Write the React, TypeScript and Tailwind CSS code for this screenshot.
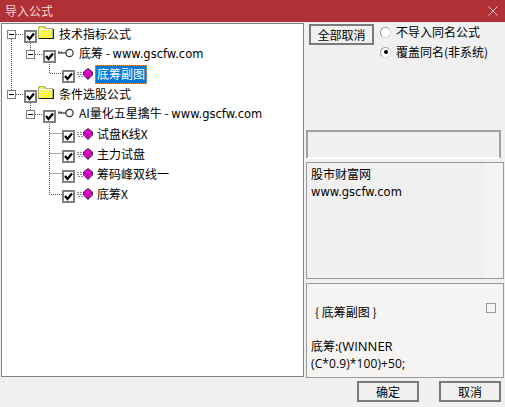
const cjk = { fontFamily: '"Noto Sans CJK SC", sans-serif' };

function Expander() {
  return (
    <span className="flex h-[9px] w-[9px] shrink-0 items-center justify-center border border-[#808080] bg-white">
      <span className="h-px w-[5px] bg-black" />
    </span>
  );
}

function Check() {
  return (
    <span className="mt-[4px] flex h-[13px] w-[13px] shrink-0 items-center justify-center border-2 border-[#808080] bg-white">
      <svg width="9" height="9" viewBox="0 0 9 9" className="block">
        <path d="M1 4 L3.5 7 L8 1.5" fill="none" stroke="#000" strokeWidth="2.2" />
      </svg>
    </span>
  );
}

function Folder() {
  return (
    <svg width="16" height="13" viewBox="0 0 16 13" shapeRendering="crispEdges" className="mb-[3px] block shrink-0">
      <defs>
        <pattern id="dither" width="2" height="2" patternUnits="userSpaceOnUse">
          <rect width="2" height="2" fill="#ffff00" />
          <rect width="1" height="1" fill="#f0f080" />
          <rect x="1" y="1" width="1" height="1" fill="#f0f080" />
        </pattern>
      </defs>
      <path d="M0.5 12 V2 L2 0.5 H6 L7.5 2 H14.5 V12 Z" fill="url(#dither)" stroke="#b0b080" />
      <path d="M1 12.5 H15.5 V2.5" fill="none" stroke="#202020" />
      <path d="M1.5 3 H13.5" stroke="#fff" />
    </svg>
  );
}

function Key() {
  return (
    <svg width="16" height="10" viewBox="0 0 16 10" className="mb-[3px] block shrink-0">
      <circle cx="11.5" cy="5" r="3.6" fill="#fff" stroke="#333" strokeWidth="1.2" />
      <path d="M0 5 H8" stroke="#333" strokeWidth="1.2" />
      <path d="M1 5 V3 M3.5 5 V3.5" stroke="#333" />
    </svg>
  );
}

function Gem() {
  return (
    <svg width="16" height="12" viewBox="0 0 16 12" className="block shrink-0">
      <path d="M0 4.5 H6 M0 6.5 H6 M1 8.5 H6" stroke="#8a8a8a" strokeDasharray="2 1" />
      <path d="M11 0.5 L15.5 4 V7 L11 11.5 L6.5 7 V4 Z" fill="#f000d8" stroke="#202020" strokeWidth="0.9" />
      <path d="M6.5 4.5 L11 6.5 L15.5 4.5 M11 6.5 V11" fill="none" stroke="#700068" strokeWidth="0.6" />
    </svg>
  );
}

function Latin({ children }: { children: string }) {
  return <span className="text-[11.5px]" style={{ fontFamily: '"DejaVu Sans", sans-serif' }}>{children}</span>;
}

function Group({ label }: { label: string }) {
  return (
    <div className="flex h-5 items-center pl-[5px]">
      <Expander />
      <span className="ml-[8px] flex"><Check /></span>
      <span className="ml-px flex"><Folder /></span>
      <span className="ml-[5px] text-[12px] leading-none text-black">{label}</span>
    </div>
  );
}

function Sub({ children }: { children: React.ReactNode }) {
  return (
    <div className="flex h-5 items-center pl-[24px]">
      <Expander />
      <span className="ml-[8px] flex"><Check /></span>
      <span className="ml-[2px] flex"><Key /></span>
      <span className="ml-[5px] whitespace-nowrap text-[12px] leading-none text-black">{children}</span>
    </div>
  );
}

function Leaf({ label, selected }: { label: React.ReactNode; selected?: boolean }) {
  return (
    <div className="flex h-5 items-center pl-[60px]">
      <Check />
      <span className="ml-[2px] flex"><Gem /></span>
      {selected ? (
        <span className="ml-[2px] flex h-[19px] items-center border border-dotted border-[#f0a040] bg-[#0078d7] px-px text-[12px] leading-none text-white">
          {label}
        </span>
      ) : (
        <span className="ml-[4px] whitespace-nowrap text-[12px] leading-none text-black">{label}</span>
      )}
    </div>
  );
}

function Radio({ on }: { on?: boolean }) {
  return (
    <span className="flex h-[11px] w-[11px] shrink-0 items-center justify-center rounded-full border border-[#9a9a9a] border-b-[#d8d8d8] border-r-[#d8d8d8] bg-white">
      {on && <span className="h-[4px] w-[4px] rounded-full bg-black" />}
    </span>
  );
}

function DlgButton({ children, className }: { children: string; className?: string }) {
  return (
    <button className={"flex h-[21px] items-center justify-center border-2 border-[#7a7a7a] bg-[#f0f0f0] text-[12px] leading-none text-black " + (className ?? "")}>
      {children}
    </button>
  );
}

export default function App() {
  return (
    <div className="flex h-[407px] w-[505px] flex-col overflow-hidden bg-[#f0f0f0] text-black" style={cjk}>
      <div className="flex h-[22px] shrink-0 items-center justify-between bg-[#b03035] pl-[5px] pr-[7px]">
        <span className="text-[12px] leading-none text-[#f3d8d8]">导入公式</span>
        <svg width="10" height="10" viewBox="0 0 10 10" className="block">
          <path d="M0.5 0.5 L9.5 9.5 M9.5 0.5 L0.5 9.5" stroke="#eec8c8" />
        </svg>
      </div>

      <div className="flex min-h-0 flex-1">
        <div className="relative ml-px mt-px h-[354px] w-[303px] shrink-0 border border-[#828282] bg-white">
          <svg width="120" height="200" className="pointer-events-none absolute left-0 top-0" fill="none" stroke="#555" strokeDasharray="1 1">
            <path d="M9.5 15 V66 M14 10.5 H21 M14 70.5 H21 M28.5 19 V27 M28.5 79 V87 M33 30.5 H40 M33 90.5 H40 M47.5 38 V49.5 H60 M47.5 98 V170.5 H60 M47.5 109.5 H60 M47.5 129.5 H60 M47.5 149.5 H60" />
          </svg>
          <div className="relative flex flex-col">
            <Group label="技术指标公式" />
            <Sub>底筹 - <Latin>www.gscfw.com</Latin></Sub>
            <Leaf label="底筹副图" selected />
            <Group label="条件选股公式" />
            <Sub>AI量化五星擒牛 - <Latin>www.gscfw.com</Latin></Sub>
            <Leaf label="试盘K线X" />
            <Leaf label="主力试盘" />
            <Leaf label="筹码峰双线一" />
            <Leaf label="底筹X" />
          </div>
        </div>

        <div className="ml-[2px] flex min-w-0 flex-1 flex-col pt-[2px]">
          <div className="flex h-[106px] shrink-0 items-start pl-[3px]">
            <DlgButton className="w-[65px]">全部取消</DlgButton>
            <div className="ml-[6px] flex flex-col gap-[4px] text-[12px] leading-[16px]">
              <div className="flex items-center gap-[5px]"><Radio /><span>不导入同名公式</span></div>
              <div className="flex items-center gap-[5px]"><Radio on /><span>覆盖同名(非系统)</span></div>
            </div>
          </div>
          <div className="h-[29px] w-[195px] shrink-0 border-2 border-b-white border-l-[#a0a0a0] border-r-[#a0a0a0] border-t-[#a0a0a0]" />
          <div className="mt-[3px] flex h-[117px] w-[198px] shrink-0 flex-col border border-[#9a9a9a] bg-[#f5f4f2]">
            <div className="h-full w-[177px] bg-[#f0f0f0] pl-[4px] pt-[2px] text-[12px] leading-[18px]">
              <div>股市财富网</div>
              <div className="text-[11.5px]" style={{ fontFamily: '"DejaVu Sans", sans-serif' }}>www.gscfw.com</div>
            </div>
          </div>
          <div className="relative mt-[4px] h-[95px] w-[198px] shrink-0 border border-[#9a9a9a] bg-[#f5f4f2] pl-[4px] pt-[19px] text-[12px] leading-[17px]">
            <div className="pl-[4px]">{"{ 底筹副图 }"}</div>
            <div className="h-[17px]" />
            <div>底筹:<span className="text-[13px]" style={{ fontFamily: '"Open Sans", sans-serif' }}>(WINNER</span></div>
            <div className="text-[12px] tracking-[0.1px]" style={{ fontFamily: '"Open Sans", sans-serif' }}>(C*0.9)*100)+50;</div>
            <span className="absolute right-[7px] top-[19px] h-[10px] w-[10px] border border-[#9a9a9a] bg-[#f5f4f2]" />
          </div>
        </div>
      </div>

      <div className="flex h-[30px] shrink-0 items-start justify-end gap-[20px] pr-[4px] pt-[4px]">
        <DlgButton className="w-[62px]">确定</DlgButton>
        <DlgButton className="w-[62px]">取消</DlgButton>
      </div>
    </div>
  );
}
